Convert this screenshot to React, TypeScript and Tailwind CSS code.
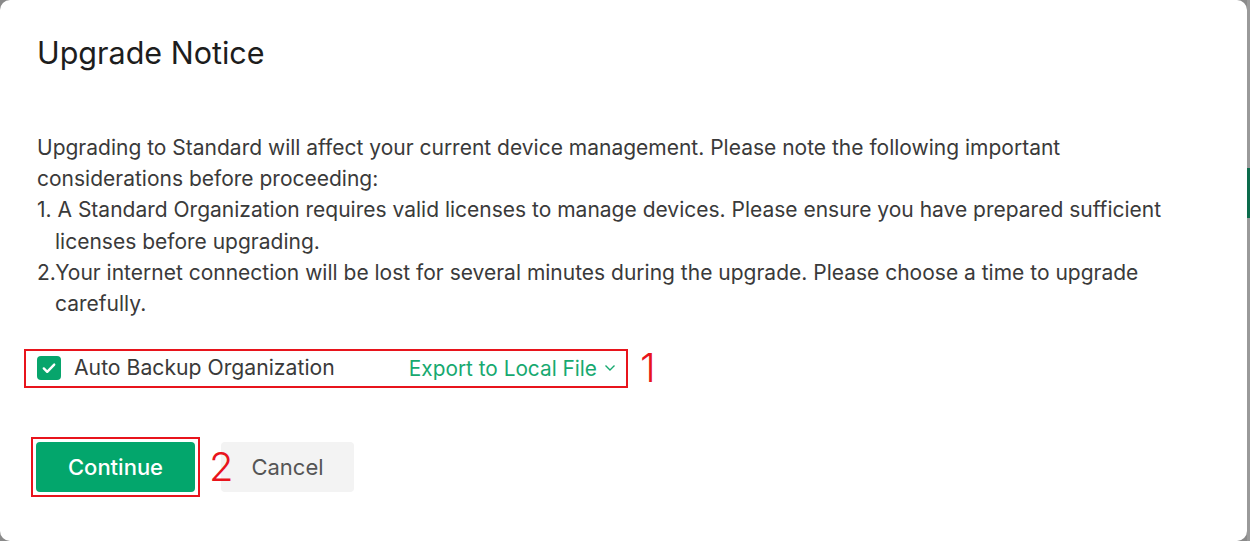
import React from "react";

export default function App() {
  return (
    <div className="w-[1250px] h-[541px] bg-[#8a8a8a] flex overflow-hidden" style={{ fontFamily: "Inter, 'Noto Sans', sans-serif" }}>
      <div className="w-[1247px] h-[541px] bg-white rounded-[10px] shrink-0 pl-[37px] pt-[35px]">
        <h1 className="text-[30.5px] leading-[36px] text-[#1d1d1d] font-normal">Upgrade Notice</h1>
        <div className="mt-[61px] text-[21px] leading-[31.2px] text-[#3a3a3a] pr-[72px]">
          <p>Upgrading to Standard will affect your current device management. Please note the following important considerations before proceeding:</p>
          <p className="pl-[18px] -indent-[18px]">1. A Standard Organization requires valid licenses to manage devices. Please ensure you have prepared sufficient licenses before upgrading.</p>
          <p className="pl-[18px] -indent-[18px]">2.Your internet connection will be lost for several minutes during the upgrade. Please choose a time to upgrade carefully.</p>
        </div>
        <div className="flex items-center mt-[29px] -ml-[13px]">
          <div className="flex items-center w-[604px] h-[39px] border-2 border-[#e8141c] pl-[11px] pr-[10px]">
            <span className="w-[24px] h-[24px] rounded-[4px] bg-[#07a56c] flex items-center justify-center">
              <svg width="18" height="18" viewBox="0 0 18 18" fill="none"><path d="M3.8 9.4l3.4 3.4 7-7.2" stroke="white" strokeWidth="2.4" strokeLinecap="round" strokeLinejoin="round" /></svg>
            </span>
            <span className="ml-[13px] text-[21.2px] text-[#3a3a3a]">Auto Backup Organization</span>
            <span className="ml-auto text-[20.8px] text-[#17a970] flex items-center">
              Export to Local File
              <svg className="ml-[7px]" width="12" height="8" viewBox="0 0 12 8" fill="none"><path d="M1.5 1.5l4.5 4.5 4.5-4.5" stroke="#17a970" strokeWidth="1.4" /></svg>
            </span>
          </div>
          <span className="ml-[12px] text-[40px] leading-none text-[#e8141c] font-light">1</span>
        </div>
        <div className="flex items-center mt-[49px] -ml-[6px]">
          <div className="border-2 border-[#e8141c] p-[3px]">
            <button className="w-[159px] h-[50px] rounded-[4px] bg-[#03a66c] text-white text-[22px] font-medium">Continue</button>
          </div>
          <span className="relative z-10 ml-[9px] w-[22px] text-[40px] leading-none text-[#e8141c] font-light">2</span>
          <button className="-ml-[10px] w-[133px] h-[50px] rounded-[4px] bg-[#f3f3f3] text-[#555] text-[22px]">Cancel</button>
        </div>
      </div>
      <div className="flex-1 flex flex-col">
        <div className="h-[168px] bg-[#9a9a9a]" />
        <div className="h-[50px] bg-[#0c6b4c]" />
        <div className="flex-1 bg-[#9a9a9a]" />
      </div>
    </div>
  );
}
